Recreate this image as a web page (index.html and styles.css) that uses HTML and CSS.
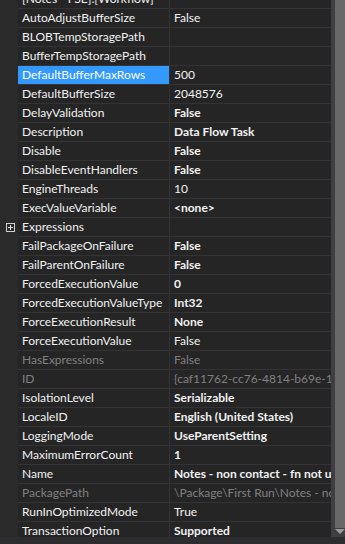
FILE: index.html
```html
<!DOCTYPE html>
<html lang="en">
<head>
  <meta charset="UTF-8">
  <title>Properties</title>
  <link rel="stylesheet" href="styles.css">
</head>
<body>
  <div class="panel">
    <div class="grid">
      <div class="rows" id="rows"></div>
    </div>
    <div class="scrollbar">
      <div class="thumb"></div>
      <div class="arrow"></div>
    </div>
  </div>
  <div class="footer"></div>

  <script>
    // name, value, style: b = bold (changed), g = grey (read only)
    const props = [
      ['[Notes - FSE].[Workflow]', '', ''],
      ['AutoAdjustBufferSize', 'False', ''],
      ['BLOBTempStoragePath', '', ''],
      ['BufferTempStoragePath', '', ''],
      ['DefaultBufferMaxRows', '500', 'sel'],
      ['DefaultBufferSize', '2048576', ''],
      ['DelayValidation', 'False', 'b'],
      ['Description', 'Data Flow Task', 'b'],
      ['Disable', 'False', 'b'],
      ['DisableEventHandlers', 'False', 'b'],
      ['EngineThreads', '10', ''],
      ['ExecValueVariable', '<none>', 'b'],
      ['Expressions', '', 'exp'],
      ['FailPackageOnFailure', 'False', 'b'],
      ['FailParentOnFailure', 'False', 'b'],
      ['ForcedExecutionValue', '0', 'b'],
      ['ForcedExecutionValueType', 'Int32', 'b'],
      ['ForceExecutionResult', 'None', 'b'],
      ['ForceExecutionValue', 'False', ''],
      ['HasExpressions', 'False', 'g'],
      ['ID', '{caf11762-cc76-4814-b69e-17f1a2c3d4e5}', 'g'],
      ['IsolationLevel', 'Serializable', 'b'],
      ['LocaleID', 'English (United States)', 'b'],
      ['LoggingMode', 'UseParentSetting', 'b'],
      ['MaximumErrorCount', '1', 'b'],
      ['Name', 'Notes - non contact - fn not updated', 'b'],
      ['PackagePath', '\\Package\\First Run\\Notes - non contact', 'g'],
      ['RunInOptimizedMode', 'True', ''],
      ['TransactionOption', 'Supported', 'b']
    ];

    function renderRows() {
      const container = document.getElementById('rows');
      props.forEach(([name, value, kind]) => {
        const row = document.createElement('div');
        row.classList.add('row');
        if (kind) row.classList.add('row-' + kind);

        const gutter = document.createElement('div');
        gutter.classList.add('gutter');
        if (kind === 'exp') {
          const box = document.createElement('span');
          box.classList.add('expander');
          gutter.appendChild(box);
        }

        const nameCell = document.createElement('div');
        nameCell.classList.add('name');
        nameCell.textContent = name;

        const valueCell = document.createElement('div');
        valueCell.classList.add('value');
        valueCell.textContent = value;

        row.appendChild(gutter);
        row.appendChild(nameCell);
        row.appendChild(valueCell);
        container.appendChild(row);
      });
    }

    renderRows();
  </script>
</body>
</html>
```

FILE: styles.css
```css
:root {
  --bg: #252526;
  --gutter: #2a2a2b;
  --line: #333336;
  --text: #f1f1f1;
  --muted: #808080;
  --select: #3399ff;
}

* {
  margin: 0;
  padding: 0;
  box-sizing: border-box;
}

body {
  font-family: Lato, 'Noto Sans', sans-serif;
  font-size: 12px;
  background-color: var(--bg);
  color: var(--text);
  overflow: hidden;
}

.panel {
  display: flex;
  height: 537px;
}

.grid {
  width: 331px;
  overflow: hidden;
}

.rows {
  margin-top: -10px;
}

.row {
  display: flex;
  height: 19px;
}

.gutter {
  width: 18px;
  flex-shrink: 0;
  background-color: var(--gutter);
  display: flex;
  align-items: center;
  padding-left: 6px;
}

.name,
.value {
  height: 19px;
  line-height: 18px;
  border-bottom: 1px solid var(--line);
  white-space: nowrap;
  overflow: hidden;
}

.name {
  width: 152px;
  flex-shrink: 0;
  padding-left: 4px;
  border-right: 1px solid var(--line);
}

.value {
  flex: 1;
  padding-left: 4px;
}

.row-b .value {
  font-weight: 700;
}

.row-g .name,
.row-g .value {
  color: var(--muted);
}

.row-sel .name {
  background-color: var(--select);
  color: #fff;
}

.expander {
  position: relative;
  width: 9px;
  height: 9px;
  border: 1px solid #d0d0d0;
}

.expander::before,
.expander::after {
  content: '';
  position: absolute;
  background-color: #e0e0e0;
}

.expander::before {
  left: 1px;
  top: 3px;
  width: 5px;
  height: 1px;
}

.expander::after {
  left: 3px;
  top: 1px;
  width: 1px;
  height: 5px;
}

.scrollbar {
  width: 14px;
  background-color: #3e3e42;
  display: flex;
  flex-direction: column;
  align-items: flex-end;
}

.thumb {
  width: 10px;
  flex: 1;
  background-color: #686868;
}

.arrow {
  width: 0;
  height: 0;
  margin: 1px 0 3px;
  border-left: 5px solid transparent;
  border-right: 5px solid transparent;
  border-top: 5px solid #999;
}

.footer {
  height: 7px;
  background-color: #2d2d30;
}
```
